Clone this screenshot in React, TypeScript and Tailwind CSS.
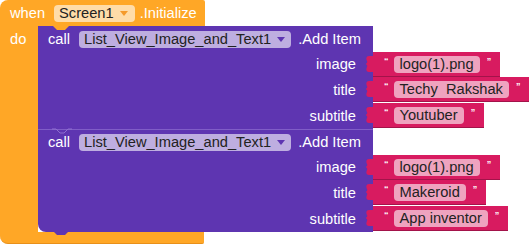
const ORANGE = "bg-[#FFA726]"

function Arrow({ color }: { color: string }) {
  return (
    <svg width="8" height="5" viewBox="0 0 8 5" className="ml-[6px] mt-[1px]">
      <path d="M0 0 H8 L4 5 Z" fill={color} />
    </svg>
  )
}

function Tab() {
  // puzzle knob sticking into the purple block
  return (
    <svg width="8" height="16" viewBox="0 0 8 16" className="absolute left-[-7px] top-[4px]">
      <path d="M8 0 V16 H3 C0 16 0 13 1 11 C2 9 0 9 0 8 C0 7 2 7 1 5 C0 3 0 0 3 0 Z" fill="#D81B60" />
    </svg>
  )
}

function Str({ text, h }: { text: string; h: string }) {
  return (
    <div className={`${h} flex items-start`}>
      <div className="relative h-[25px] bg-[#D81B60] border-b border-[#a3134a] flex items-center pl-[11px] pr-[9px]">
        <Tab />
        <span className="text-white text-[9px] leading-none self-start mt-[5px] font-bold">“</span>
        <span className="ml-[5px] h-[17px] rounded-[4px] bg-white/60 px-[6px] flex items-center text-[#222] whitespace-pre">
          {text}
        </span>
        <span className="ml-[7px] text-white text-[9px] leading-none self-start mt-[5px] font-bold">”</span>
      </div>
    </div>
  )
}

function CallBlock({ items, last }: { items: [string, string, string]; last?: boolean }) {
  const labels = ["image", "title", "subtitle"]
  const heights = ["h-[25px]", "h-[26px]", "h-[26px]"]
  return (
    <div className="flex">
      <div
        className={`relative w-[335px] bg-[#5E35B1] text-white flex flex-col ${last ? "rounded-bl-[8px]" : ""}`}
      >
        {last && (
          <>
            <svg width="20" height="6" viewBox="0 0 20 6" className="absolute left-[14px] top-[-1px]">
              <path d="M0 1 H4 L8 5 H12 L16 1 H20" fill="none" stroke="#8e6fd0" strokeWidth="1" />
            </svg>
            <div className="absolute left-0 right-0 top-0 h-px bg-[#8e6fd0]/70" />
            <svg width="16" height="5" viewBox="0 0 16 5" className="absolute left-[15px] bottom-[-4px]">
              <path d="M0 0 H16 L12 4 H4 Z" fill="#5E35B1" />
            </svg>
          </>
        )}
        <div className="h-[26px] flex items-center pl-[10px]">
          <span>call</span>
          <span className="ml-[9px] h-[17px] rounded-[4px] bg-white/60 pl-[5px] pr-[6px] flex items-center text-[#222]">
            List_View_Image_and_Text1
            <Arrow color="#5E35B1" />
          </span>
          <span className="ml-[7px]">.Add Item</span>
        </div>
        {labels.map((l, i) => (
          <div key={l} className={`${heights[i]} flex items-center justify-end pr-[17px]`}>
            {l}
          </div>
        ))}
      </div>
      <div className="flex flex-col pt-[26px]">
        {items.map((t, i) => (
          <Str key={i} text={t} h={heights[i]} />
        ))}
      </div>
    </div>
  )
}

export default function App() {
  return (
    <div className="w-[529px] h-[245px] bg-white overflow-hidden font-['Liberation_Sans',Arial,sans-serif] text-[11pt] leading-none">
      <div className="flex flex-col items-start">
        <div className={`w-[205px] h-[26px] ${ORANGE} rounded-tl-[8px] rounded-tr-[2px] flex items-center pl-[10px] text-white`}>
          <span>when</span>
          <span className="ml-[9px] h-[17px] rounded-[4px] bg-white/60 pl-[5px] pr-[7px] flex items-center text-[#222]">
            Screen1
            <Arrow color="#f59a2a" />
          </span>
          <span className="ml-[5px]">.Initialize</span>
        </div>
        <div className="flex relative">
          <svg width="16" height="5" viewBox="0 0 16 5" className="absolute left-[53px] top-0 z-10">
            <path d="M0 0 H16 L12 4 H4 Z" fill="#FFA726" />
          </svg>
          <div className={`w-[38px] ${ORANGE} pl-[10px] pt-[6px] text-white`}>do</div>
          <div className="flex flex-col">
            <CallBlock items={["logo(1).png", "Techy  Rakshak", "Youtuber"]} />
            <CallBlock items={["logo(1).png", "Makeroid", "App inventor"]} last />
          </div>
        </div>
        <div className={`w-[204px] h-[12px] ${ORANGE} rounded-bl-[8px] rounded-br-[2px] border-b border-[#e8901a]`} />
      </div>
    </div>
  )
}
